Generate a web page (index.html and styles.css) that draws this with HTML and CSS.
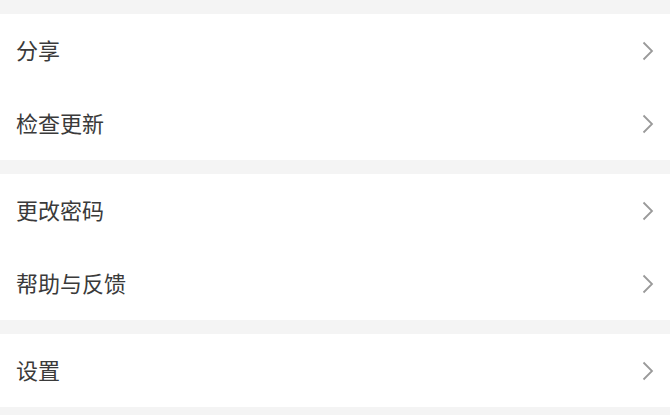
FILE: index.html
```html
<!DOCTYPE html>
<html lang="zh-CN">
<head>
    <meta charset="UTF-8">
    <meta name="viewport" content="width=device-width, initial-scale=1.0">
    <title>我的</title>
    <link rel="stylesheet" href="styles.css">
</head>
<body>
    <div class="menu">
        <div class="menu-group">
            <div class="menu-item"><span class="label">分享</span><svg class="arrow" viewBox="0 0 12 20"><path d="M1.5 1.5 L10 10 L1.5 18.5"/></svg></div>
            <div class="menu-item"><span class="label">检查更新</span><svg class="arrow" viewBox="0 0 12 20"><path d="M1.5 1.5 L10 10 L1.5 18.5"/></svg></div>
        </div>
        <div class="menu-group">
            <div class="menu-item"><span class="label">更改密码</span><svg class="arrow" viewBox="0 0 12 20"><path d="M1.5 1.5 L10 10 L1.5 18.5"/></svg></div>
            <div class="menu-item"><span class="label">帮助与反馈</span><svg class="arrow" viewBox="0 0 12 20"><path d="M1.5 1.5 L10 10 L1.5 18.5"/></svg></div>
        </div>
        <div class="menu-group">
            <div class="menu-item"><span class="label">设置</span><svg class="arrow" viewBox="0 0 12 20"><path d="M1.5 1.5 L10 10 L1.5 18.5"/></svg></div>
        </div>
    </div>
</body>
</html>
```

FILE: styles.css
```css
body {
    margin: 0;
    background-color: #f4f4f4;
    font-family: "Noto Sans CJK SC", "Noto Sans", sans-serif;
}

.menu {
    display: flex;
    flex-direction: column;
    gap: 14px;
    padding-top: 14px;
}

.menu-group {
    background-color: #ffffff;
}

.menu-item {
    height: 73px;
    display: flex;
    align-items: center;
    justify-content: space-between;
    padding: 0 16px 0 16px;
}

.label {
    font-size: 22px;
    color: #3a3a3a;
    margin-top: -3px;
}

.arrow {
    width: 12px;
    height: 20px;
    fill: none;
    stroke: #9a9a9a;
    stroke-width: 1.8;
}
```
